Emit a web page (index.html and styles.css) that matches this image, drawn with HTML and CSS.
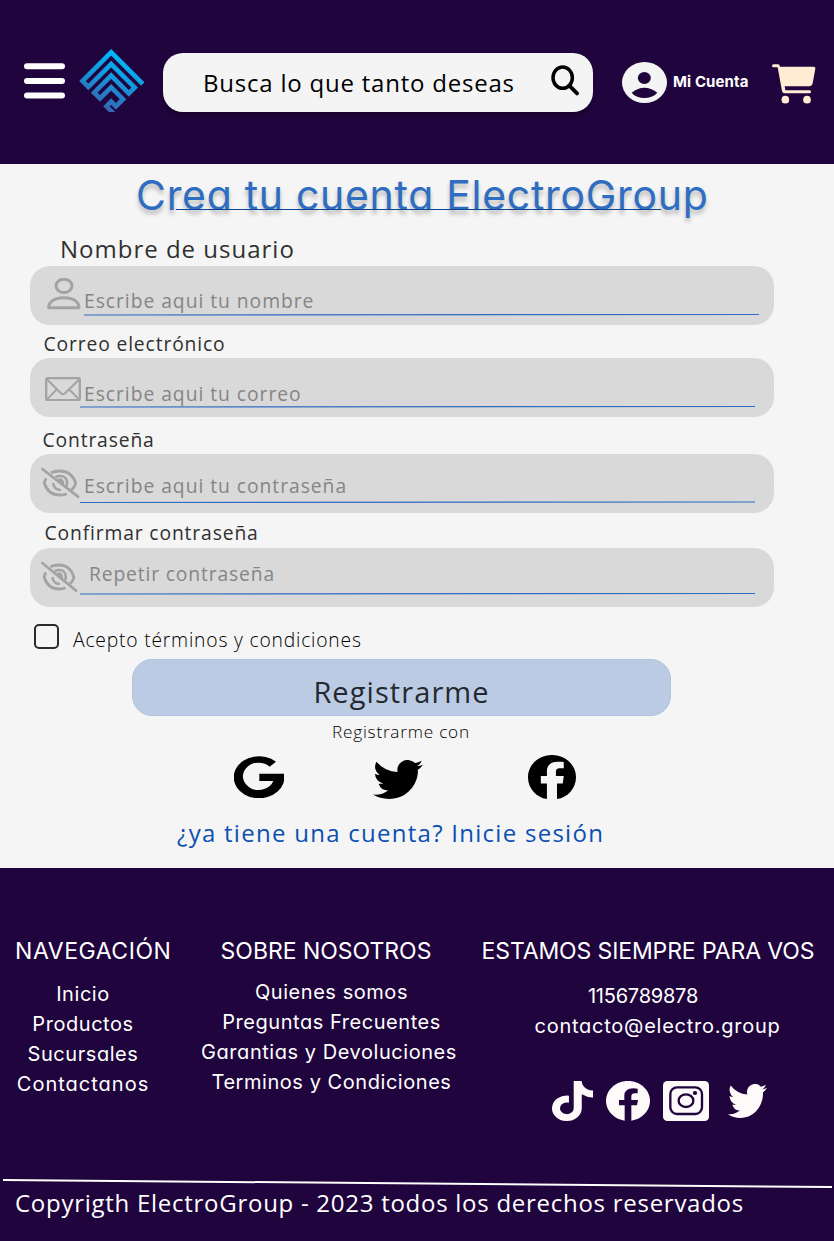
FILE: index.html
```html
<!DOCTYPE html>
<html lang="es">
<head>
<meta charset="utf-8">
<title>ElectroGroup - Crea tu cuenta</title>
<link rel="stylesheet" href="styles.css">
</head>
<body>
<svg width="0" height="0" class="defs">
  <symbol id="twitter" viewBox="0 2 16 13" preserveAspectRatio="none"><path d="M5.026 15c6.038 0 9.341-5.003 9.341-9.334 0-.14 0-.282-.006-.422A6.685 6.685 0 0 0 16 3.542a6.658 6.658 0 0 1-1.889.518 3.301 3.301 0 0 0 1.447-1.817 6.533 6.533 0 0 1-2.087.793A3.286 3.286 0 0 0 7.875 6.03a9.325 9.325 0 0 1-6.767-3.429 3.289 3.289 0 0 0 1.018 4.382A3.323 3.323 0 0 1 .64 6.575v.045a3.288 3.288 0 0 0 2.632 3.218 3.203 3.203 0 0 1-.865.115 3.230 3.230 0 0 1-.614-.057 3.283 3.283 0 0 0 3.067 2.277A6.588 6.588 0 0 1 .78 13.580a6.320 6.320 0 0 1-.78-.045A9.344 9.344 0 0 0 5.026 15z"/></symbol>
  <symbol id="eye-off" viewBox="62 126 118 96" preserveAspectRatio="none">
    <g fill="none" stroke="#a3a3a3" stroke-width="8.500">
      <path d="M92 143C98 140 108 138 120 138C144 138 161 153 167 175C165 183 160 190 154 195M78 160C75 164 73 169 72 174C79 197 97 210 120 210C127 210 134 209 140 206"/>
      <path d="M106 156C110 154 115 153 120 153C133 153 141 162 141 174C141 178 140 182 138 185M99 174C99 187 108 195 122 195" stroke-width="8"/>
      <path d="M114 163C124 159 132 168 130 178Z" fill="#a3a3a3" stroke-width="4"/>
      <path d="M66 132L174 215" stroke-linecap="round"/>
    </g>
  </symbol>
</svg>

<header class="topbar">
  <svg class="menu" viewBox="0 0 41 36" width="41" height="36"><path d="M3 3.200H38M3 17.900H38M3 32.500H38" stroke="#fff" stroke-width="6" stroke-linecap="round"/></svg>
  <svg class="logo" viewBox="237 57 197 189" width="66" height="63">
    <defs><linearGradient id="blue" x1=".65" y1="0.1" x2=".3" y2="1"><stop offset="0" stop-color="#00b4f5"/><stop offset=".35" stop-color="#139ade"/><stop offset="1" stop-color="#3a5dab"/></linearGradient></defs>
    <path fill="none" stroke="url(#blue)" stroke-width="14" d="M428 162L333 67L247 153L264.500 170.500L333 102L403.500 172.500L386 190L333 137L282 188L299.500 205.500L333 172L368.500 207.500L347 229L333 215L319 229L340 250"/>
  </svg>
  <div class="search">
    <span class="search-text">Busca lo que tanto deseas</span>
    <svg viewBox="64 76 86 92" width="28.700" height="30.700" fill="none" stroke="#000"><ellipse cx="99" cy="114" rx="29" ry="32" stroke-width="10.500"/><path d="M119 138L142 161" stroke-width="11.500" stroke-linecap="round"/></svg>
  </div>
  <svg class="avatar" viewBox="276 66 135 123" width="45" height="41"><ellipse cx="343.500" cy="127.500" rx="67.500" ry="61.500" fill="#f4f4f4"/><ellipse cx="343" cy="114" rx="19.500" ry="18" fill="#20043d"/><path d="M305 158C318 147 330 143 343 143S369 147 382 158C372 169 358 174 343 174S314 169 305 158Z" fill="#20043d"/></svg>
  <span class="account">Mi Cuenta</span>
  <svg class="cart" viewBox="726 71 132 120" width="44" height="40" fill="#ffecd2"><path d="M731 72H744Q749 72 750 79H851Q857 79 856 85L848 129Q846 138 837 138H764L766 150H839Q843 150 843 154.500T839 159H764Q757 159 756 152L743 81H731Q726 81 726 76.500T731 72Z"/><circle cx="766" cy="178" r="11.500"/><circle cx="831" cy="178" r="11.500"/></svg>
</header>

<main>
  <h1 class="title">Crea tu cuenta ElectroGroup</h1>

  <div class="label l-user">Nombre de usuario</div>
  <div class="field f-user">
    <svg class="icon" viewBox="80 54 102 95" width="34" height="31.700" preserveAspectRatio="none" fill="none" stroke="#a3a3a3" stroke-width="9"><ellipse cx="131" cy="77.500" rx="24" ry="20"/><path d="M85 143C85 123 106 113 131 113S176 123 176 143Z" stroke-linejoin="round"/></svg>
    <span class="hint">Escribe aqui tu nombre</span>
    <svg class="rule" viewBox="0 0 675 3" width="675" height="3"><path d="M0 2L675 1.500"/></svg>
  </div>

  <div class="label l-mail">Correo electrónico</div>
  <div class="field f-mail">
    <svg class="icon" viewBox="75 350 108 73" width="36" height="24.300" preserveAspectRatio="none" fill="none" stroke="#a3a3a3" stroke-width="7"><rect x="78.500" y="353.500" width="101" height="66" rx="5"/><path d="M80 356L122 398Q129 405 136 398L179 356M80 418L111 387M147 387L178 418" stroke-width="6"/></svg>
    <span class="hint">Escribe aqui tu correo</span>
    <svg class="rule" viewBox="0 0 675 3" width="675" height="3"><path d="M0 2L675 1.500"/></svg>
  </div>

  <div class="label l-pass">Contraseña</div>
  <div class="field f-pass">
    <svg class="icon" width="39" height="32"><use href="#eye-off" width="39" height="32"/></svg>
    <span class="hint">Escribe aqui tu contraseña</span>
    <svg class="rule" viewBox="0 0 675 3" width="675" height="3"><path d="M0 1.500L675 1"/></svg>
  </div>

  <div class="label l-conf">Confirmar contraseña</div>
  <div class="field f-conf">
    <svg class="icon" width="37" height="32"><use href="#eye-off" width="37" height="32"/></svg>
    <span class="hint">Repetir contraseña</span>
    <svg class="rule" viewBox="0 0 675 3" width="675" height="3"><path d="M0 2L675 1.500"/></svg>
  </div>

  <label class="terms"><span class="box"></span><span class="terms-text">Acepto términos y condiciones</span></label>
  <button class="submit">Registrarme</button>
  <div class="with">Registrarme con</div>
  <div class="social">
    <svg class="google" viewBox="42 110 150 126" width="50" height="42"><path d="M168 127A76 63 0 1 0 192 163H118V185H160A47 41 0 1 1 149 142Z"/></svg>
    <svg class="tw" width="50" height="39"><use href="#twitter" width="50" height="39"/></svg>
    <svg class="fb" viewBox="0 0 16 16" width="48" height="44" preserveAspectRatio="none"><path d="M16 8.049c0-4.446-3.582-8.050-8-8.050C3.580 0-.002 3.603-.002 8.050c0 4.017 2.690 7.347 6.310 7.951v-5.625h-2.030V7.650H6.310V5.875c0-2.317 1.495-3.431 3.522-3.431.876 0 2.091.157 2.091.157v2.180h-1.209c-1.193 0-1.403.621-1.403 1.258v1.610h2.618l-.354 2.726H9.660V16c3.624-.604 6.340-3.934 6.340-7.951z"/></svg>
  </div>
  <a class="login">¿ya tiene una cuenta? Inicie sesión</a>
</main>

<footer>
  <div class="columns">
    <section class="nav">
      <h2>NAVEGACIÓN</h2>
      <ul><li>Inicio</li><li>Productos</li><li>Sucursales</li><li class="wide">Contactanos</li></ul>
    </section>
    <section class="about">
      <h2>SOBRE NOSOTROS</h2>
      <ul><li>Quienes somos</li><li>Preguntas Frecuentes</li><li class="long">Garantias y Devoluciones</li><li>Terminos y Condiciones</li></ul>
    </section>
    <section class="contact">
      <h2>ESTAMOS SIEMPRE PARA VOS</h2>
      <ul><li class="phone">1156789878</li><li class="email">contacto@electro.group</li></ul>
      <div class="networks">
        <svg viewBox="0 0 448 512" width="41" height="40" preserveAspectRatio="none"><path d="M448,209.910a210.060,210.060,0,0,1-122.770-39.250V349.380A162.550,162.550,0,1,1,185,188.310V278.200a74.620,74.620,0,1,0,52.230,71.180V0l88,0a121.180,121.180,0,0,0,1.860,22.170h0A122.180,122.180,0,0,0,381,102.390a121.430,121.430,0,0,0,67,20.140Z"/></svg>
        <svg class="n-fb" viewBox="228 63 132 120" width="44" height="40"><path d="M284 182A66 60 0 1 1 304 182V136H321L324 120H304V110Q304 100 315 100H323V86Q283 80 283 108V120H267V136H284Z"/></svg>
        <svg class="n-ig" viewBox="399 63 138 120" width="46" height="40"><rect x="399" y="63" width="138" height="120" rx="13"/><g fill="none" stroke="#20043d" stroke-width="7"><rect x="421" y="82" width="95" height="80" rx="20"/><ellipse cx="468" cy="122" rx="22" ry="19"/></g><ellipse cx="495" cy="99" rx="6.500" ry="6" fill="#20043d"/></svg>
        <svg class="n-tw" width="39" height="34"><use href="#twitter" width="39" height="34"/></svg>
      </div>
    </section>
  </div>
  <svg class="divider" viewBox="0 0 834 12" width="834" height="12"><path d="M3 2L832 9" stroke="#fff" stroke-width="2"/></svg>
  <p class="copy">Copyrigth ElectroGroup - 2023 todos los derechos reservados</p>
</footer>
</body>
</html>
```
FILE: styles.css
```css
* { box-sizing: border-box; margin: 0; padding: 0; }
body {
  width: 834px;
  background: #f5f5f5;
  font-family: "Open Sans", "Liberation Sans", sans-serif;
  white-space: nowrap;
}
svg { display: block; flex: none; }
.defs { position: absolute; }

.topbar {
  height: 164px;
  background: #20043d;
  display: flex;
  align-items: flex-start;
  padding-left: 24px;
}
.menu { margin-top: 63px; }
.logo { margin: 49px 0 0 14px; }
.search {
  width: 430px;
  height: 59px;
  margin: 53px 0 0 18px;
  padding: 0 13px 0 40px;
  border-radius: 20px;
  background: #f4f4f4;
  box-shadow: 0 4px 4px rgba(0, 0, 0, .25);
  display: flex;
  justify-content: space-between;
}
.search svg { margin-top: 12px; }
.search-text { font-size: 24px; line-height: 59px; letter-spacing: .780px; color: #000; }
.avatar { margin: 62px 0 0 29px; }
.account {
  width: 77px;
  margin: 67px 0 0 6px;
  font: 700 15px/30px Inter, sans-serif;
  letter-spacing: .1px;
  color: #fff;
}
.cart { margin: 64px 0 0 22px; }

main { height: 704px; padding-top: 1px; }
.title {
  position: relative;
  padding-left: 136px;
  font: 400 41px/60px Inter, sans-serif;
  font-feature-settings: "cv11";
  letter-spacing: .690px;
  color: #2f6dc0;
  text-shadow: 0 4px 4px rgba(0, 0, 0, .25);
}
.title::after {
  content: "";
  position: absolute;
  left: 176px;
  top: 44px;
  width: 485px;
  height: 1px;
  background: #0c4596;
}
.label { font-size: 19.300px; line-height: 31px; letter-spacing: .860px; color: #303030; }
.l-user { height: 41px; padding: 5px 0 0 60px; font-size: 24px; line-height: 37px; letter-spacing: 1px; }
.l-mail { height: 33px; padding: 3px 0 0 43.500px; line-height: 30px; }
.l-mail, .l-pass, .l-conf { line-height: 31px; }
.l-pass { height: 37px; padding: 7px 0 0 42.500px; }
.l-conf { height: 35px; padding: 4px 0 0 44.500px; }

.field {
  display: grid;
  grid-template: 47px 12px / 54px 1fr;
  width: 744px;
  height: 59px;
  margin-left: 30px;
  border-radius: 20px;
  background: #d9d9d9;
}
.hint { font-size: 19.300px; line-height: 31px; letter-spacing: .960px; color: #858585; }
.rule { grid-column: 2; }
.rule path { stroke: #2f6dc0; stroke-width: 1.200; }
.f-user .icon { margin: 12px 0 0 17px; }
.f-user .hint { padding-top: 19px; height: 47px; }
.f-mail .icon { margin: 19px 0 0 15px; }
.f-mail .hint { padding-top: 20px; height: 47px; }
.f-pass .icon { margin: 13px 0 0 11px; }
.f-pass .hint { padding-top: 16px; }
.f-conf .icon { margin: 13px 0 0 11px; }
.f-conf .hint { padding-top: 10px; margin-left: 5px; letter-spacing: .850px; }
.f-mail .rule, .f-pass .rule, .f-conf .rule { margin-left: -4px; }
.f-conf { grid-template-rows: 44px 15px; }

.terms { display: flex; height: 52px; padding: 17px 0 0 34px; }
.box { width: 25px; height: 25px; border: 2px solid #2b2b2b; border-radius: 5px; }
.terms-text { margin-left: 14px; font-size: 19.300px; font-weight: 300; line-height: 31px; letter-spacing: .800px; color: #000; }
.submit {
  display: block;
  width: 539px;
  height: 57px;
  margin-left: 132px;
  padding-top: 7px;
  border: 1px solid #afc4e0;
  border-radius: 20px;
  background: #bbcbe4;
  font: 400 29px/50px "Open Sans", sans-serif;
  letter-spacing: 1.080px;
  color: #24292f;
}
.with { height: 31px; padding-left: 332px; font-size: 17.200px; font-weight: 300; line-height: 31px; letter-spacing: .780px; color: #000; }
.social { display: flex; height: 60px; padding-left: 234px; }
.google { margin-top: 9px; }
.tw { margin: 13px 0 0 89px; }
.fb { margin: 8px 0 0 105px; }
.login { display: block; padding-left: 177px; font-size: 24px; line-height: 51px; letter-spacing: 1.270px; color: #0b50b0; }

footer { height: 373px; background: #20043d; color: #fff; }
.columns { display: grid; grid-template-columns: 166px 326px 342px; height: 310px; padding-top: 65px; text-align: center; }
h2 { font: 400 23px/36px Inter, sans-serif; }
ul { list-style: none; font: 400 20px/30px Inter, sans-serif; letter-spacing: .550px; }
h2, ul { font-feature-settings: "cv11"; }
.nav h2 { letter-spacing: .550px; padding-left: 15px; text-align: left; }
.nav ul { padding-top: 10px; }
.wide { letter-spacing: 1px; }
.about h2 { letter-spacing: -.020px; margin-left: -6px; }
.about ul { padding: 8px 0 0 5px; }
.long { margin-left: -5px; }
.contact h2 { letter-spacing: -.120px; margin-left: -30px; }
.contact ul { padding-top: 12px; }
.phone { letter-spacing: -.230px; padding-right: 40px; }
.email { letter-spacing: .750px; padding-right: 11px; }
.networks { display: flex; margin: 40px 0 0 60px; fill: #fffafa; }
.n-fb { margin-left: 13px; }
.n-ig { margin-left: 13px; }
.n-tw { margin: 3px 0 0 19px; }
.copy { padding: 0 0 0 15px; font-size: 24px; line-height: 25px; letter-spacing: .730px; }
```
